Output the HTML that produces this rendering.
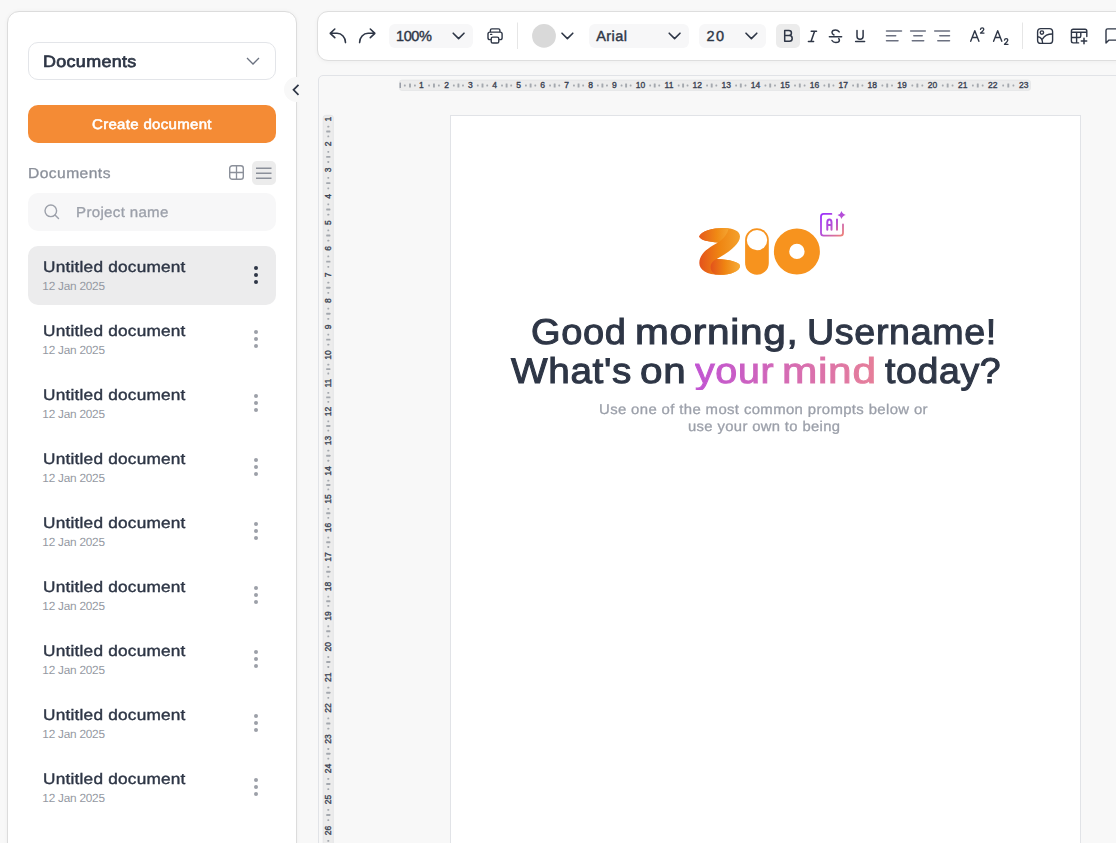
<!DOCTYPE html>
<html><head><meta charset="utf-8">
<style>
*{box-sizing:border-box;margin:0;padding:0}
html,body{width:1116px;height:843px;overflow:hidden;background:#f8f8f8;font-family:"Liberation Sans",sans-serif;color:#2e3646}
.a{position:absolute}
.t{position:absolute;white-space:nowrap;line-height:1;text-rendering:geometricPrecision}
svg{position:absolute;overflow:visible}
.ttl{font-size:15px;font-weight:bold;color:#2e3646}
.dt{font-size:11px;color:#8e939c}
.dot{position:absolute;width:4px;height:4px;border-radius:50%}
.rn{position:absolute;font-size:9px;font-weight:bold;color:#3a4252;line-height:1;white-space:nowrap}
</style></head><body>

<div class="a" style="left:7px;top:11px;width:290px;height:900px;background:#fff;border:1px solid #dcdcdc;border-radius:12px;box-shadow:0 0 4px rgba(0,0,0,0.04)"></div>
<div class="a" style="left:28px;top:42px;width:248px;height:38px;border:1px solid #e3e5e9;border-radius:10px;background:#fff"></div>
<div class="t" style="left:43.21px;top:54px;font-size:16.4px;font-weight:normal;letter-spacing:0.300px;-webkit-text-stroke:0.70px currentColor;transform:scaleX(1.0933);transform-origin:0 0;color:#2e3646">Documents</div>
<svg style="left:246px;top:57px" width="14" height="8" viewBox="0 0 14 8"><path d="M1 1 L7 7 L13 1" fill="none" stroke="#6b7280" stroke-width="1.3"/></svg>
<div class="a" style="left:28px;top:105px;width:248px;height:38px;border-radius:10px;background:#f48b35"></div>
<div class="t" style="left:91.56px;top:117px;font-size:14px;font-weight:normal;letter-spacing:0.300px;-webkit-text-stroke:0.55px currentColor;transform:scaleX(1.0710);transform-origin:0 0;color:#fff">Create document</div>
<div class="t" style="left:27.92px;top:167px;font-size:14.5px;font-weight:normal;letter-spacing:0.400px;-webkit-text-stroke:0.30px currentColor;transform:scaleX(1.0771);transform-origin:0 0;color:#8b909a">Documents</div>
<svg style="left:229px;top:165px" width="16" height="16" viewBox="0 0 16 16"><rect x="0.7" y="0.7" width="13.6" height="13.6" rx="2.6" fill="none" stroke="#8b909a" stroke-width="1.4"/><path d="M7.5 1 V14 M1 7.5 H14" stroke="#8b909a" stroke-width="1.3"/></svg>
<div class="a" style="left:252px;top:161px;width:24px;height:24px;border-radius:5px;background:#ececec"></div>
<svg style="left:256px;top:167px" width="16" height="12" viewBox="0 0 16 12"><path d="M0 1.2 H15.5 M0 6.2 H15.5 M0 11.2 H15.5" stroke="#8b909a" stroke-width="1.5"/></svg>
<div class="a" style="left:28px;top:193px;width:248px;height:38px;border-radius:10px;background:#f7f7f8"></div>
<svg style="left:44px;top:204px" width="16" height="16" viewBox="0 0 16 16"><circle cx="6.8" cy="6.8" r="5.8" fill="none" stroke="#9ca0aa" stroke-width="1.4"/><path d="M11 11 L14.5 14.5" stroke="#9ca0aa" stroke-width="1.4" stroke-linecap="round"/></svg>
<div class="t" style="left:75.95px;top:206px;font-size:14.4px;font-weight:normal;letter-spacing:0.300px;-webkit-text-stroke:0.30px currentColor;transform:scaleX(1.0491);transform-origin:0 0;color:#9ca0aa">Project name</div>
<div class="a" style="left:28px;top:246px;width:248px;height:59px;border-radius:10px;background:#ececed"></div>
<div class="t" style="left:42.97px;top:260px;font-size:15.3px;font-weight:normal;letter-spacing:0.200px;-webkit-text-stroke:0.40px currentColor;transform:scaleX(1.1257);transform-origin:0 0;color:#2e3646">Untitled document</div>
<div class="t" style="left:42.30px;top:281px;font-size:11.8px;font-weight:normal;letter-spacing:-0.230px;color:#9499a2">12 Jan 2025</div>
<div class="dot" style="left:254px;top:266px;background:#2e3646"></div>
<div class="dot" style="left:254px;top:273px;background:#2e3646"></div>
<div class="dot" style="left:254px;top:280px;background:#2e3646"></div>
<div class="t" style="left:42.97px;top:324px;font-size:15.3px;font-weight:normal;letter-spacing:0.200px;-webkit-text-stroke:0.40px currentColor;transform:scaleX(1.1257);transform-origin:0 0;color:#2e3646">Untitled document</div>
<div class="t" style="left:42.30px;top:345px;font-size:11.8px;font-weight:normal;letter-spacing:-0.230px;color:#9499a2">12 Jan 2025</div>
<div class="dot" style="left:254px;top:330px;background:#9ca0a8"></div>
<div class="dot" style="left:254px;top:337px;background:#9ca0a8"></div>
<div class="dot" style="left:254px;top:344px;background:#9ca0a8"></div>
<div class="t" style="left:42.97px;top:388px;font-size:15.3px;font-weight:normal;letter-spacing:0.200px;-webkit-text-stroke:0.40px currentColor;transform:scaleX(1.1257);transform-origin:0 0;color:#2e3646">Untitled document</div>
<div class="t" style="left:42.30px;top:409px;font-size:11.8px;font-weight:normal;letter-spacing:-0.230px;color:#9499a2">12 Jan 2025</div>
<div class="dot" style="left:254px;top:394px;background:#9ca0a8"></div>
<div class="dot" style="left:254px;top:401px;background:#9ca0a8"></div>
<div class="dot" style="left:254px;top:408px;background:#9ca0a8"></div>
<div class="t" style="left:42.97px;top:452px;font-size:15.3px;font-weight:normal;letter-spacing:0.200px;-webkit-text-stroke:0.40px currentColor;transform:scaleX(1.1257);transform-origin:0 0;color:#2e3646">Untitled document</div>
<div class="t" style="left:42.30px;top:473px;font-size:11.8px;font-weight:normal;letter-spacing:-0.230px;color:#9499a2">12 Jan 2025</div>
<div class="dot" style="left:254px;top:458px;background:#9ca0a8"></div>
<div class="dot" style="left:254px;top:465px;background:#9ca0a8"></div>
<div class="dot" style="left:254px;top:472px;background:#9ca0a8"></div>
<div class="t" style="left:42.97px;top:516px;font-size:15.3px;font-weight:normal;letter-spacing:0.200px;-webkit-text-stroke:0.40px currentColor;transform:scaleX(1.1257);transform-origin:0 0;color:#2e3646">Untitled document</div>
<div class="t" style="left:42.30px;top:537px;font-size:11.8px;font-weight:normal;letter-spacing:-0.230px;color:#9499a2">12 Jan 2025</div>
<div class="dot" style="left:254px;top:522px;background:#9ca0a8"></div>
<div class="dot" style="left:254px;top:529px;background:#9ca0a8"></div>
<div class="dot" style="left:254px;top:536px;background:#9ca0a8"></div>
<div class="t" style="left:42.97px;top:580px;font-size:15.3px;font-weight:normal;letter-spacing:0.200px;-webkit-text-stroke:0.40px currentColor;transform:scaleX(1.1257);transform-origin:0 0;color:#2e3646">Untitled document</div>
<div class="t" style="left:42.30px;top:601px;font-size:11.8px;font-weight:normal;letter-spacing:-0.230px;color:#9499a2">12 Jan 2025</div>
<div class="dot" style="left:254px;top:586px;background:#9ca0a8"></div>
<div class="dot" style="left:254px;top:593px;background:#9ca0a8"></div>
<div class="dot" style="left:254px;top:600px;background:#9ca0a8"></div>
<div class="t" style="left:42.97px;top:644px;font-size:15.3px;font-weight:normal;letter-spacing:0.200px;-webkit-text-stroke:0.40px currentColor;transform:scaleX(1.1257);transform-origin:0 0;color:#2e3646">Untitled document</div>
<div class="t" style="left:42.30px;top:665px;font-size:11.8px;font-weight:normal;letter-spacing:-0.230px;color:#9499a2">12 Jan 2025</div>
<div class="dot" style="left:254px;top:650px;background:#9ca0a8"></div>
<div class="dot" style="left:254px;top:657px;background:#9ca0a8"></div>
<div class="dot" style="left:254px;top:664px;background:#9ca0a8"></div>
<div class="t" style="left:42.97px;top:708px;font-size:15.3px;font-weight:normal;letter-spacing:0.200px;-webkit-text-stroke:0.40px currentColor;transform:scaleX(1.1257);transform-origin:0 0;color:#2e3646">Untitled document</div>
<div class="t" style="left:42.30px;top:729px;font-size:11.8px;font-weight:normal;letter-spacing:-0.230px;color:#9499a2">12 Jan 2025</div>
<div class="dot" style="left:254px;top:714px;background:#9ca0a8"></div>
<div class="dot" style="left:254px;top:721px;background:#9ca0a8"></div>
<div class="dot" style="left:254px;top:728px;background:#9ca0a8"></div>
<div class="t" style="left:42.97px;top:772px;font-size:15.3px;font-weight:normal;letter-spacing:0.200px;-webkit-text-stroke:0.40px currentColor;transform:scaleX(1.1257);transform-origin:0 0;color:#2e3646">Untitled document</div>
<div class="t" style="left:42.30px;top:793px;font-size:11.8px;font-weight:normal;letter-spacing:-0.230px;color:#9499a2">12 Jan 2025</div>
<div class="dot" style="left:254px;top:778px;background:#9ca0a8"></div>
<div class="dot" style="left:254px;top:785px;background:#9ca0a8"></div>
<div class="dot" style="left:254px;top:792px;background:#9ca0a8"></div>
<div class="a" style="left:284px;top:77px;width:25px;height:25px;border-radius:50%;background:#f8f8f8"></div>
<svg style="left:292px;top:84px" width="8" height="12" viewBox="0 0 8 12"><path d="M6.5 0.8 L1.5 5.8 L6.5 10.8" fill="none" stroke="#2e3646" stroke-width="1.7"/></svg>
<div class="a" style="left:317px;top:11px;width:900px;height:50px;background:#fff;border:1px solid #dedede;border-radius:11px;box-shadow:0 1px 4px rgba(0,0,0,0.04)"></div>
<div class="a" style="left:318px;top:75px;width:900px;height:900px;background:#f8f8f8;border:1px solid #e1e3e7;border-radius:5px"></div>
<div class="a" style="left:450px;top:115px;width:631px;height:800px;background:#fff;border:1px solid #e1e3e7"></div>
<div class="a" style="left:389px;top:24px;width:84px;height:24px;border-radius:6px;background:#f7f7f8"></div>
<div class="a" style="left:588.5px;top:24px;width:100.5px;height:24px;border-radius:6px;background:#f7f7f8"></div>
<div class="a" style="left:699px;top:24px;width:67px;height:24px;border-radius:6px;background:#f7f7f8"></div>
<svg style="left:0;top:0" width="1116" height="843" viewBox="0 0 1116 843"><path fill="none" stroke="#2e3646" stroke-width="1.6" stroke-linecap="round" stroke-linejoin="round" d="M334.8 29 L330.2 33.3 L334.8 37.6 M330.2 33.3 H337 A8.5 9.3 0 0 1 345.5 42.6"/><path fill="none" stroke="#2e3646" stroke-width="1.6" stroke-linecap="round" stroke-linejoin="round" d="M370.3 29 L374.9 33.3 L370.3 37.6 M374.9 33.3 H368.1 A8.5 9.3 0 0 0 359.6 42.6"/><path fill="none" stroke="#2e3646" stroke-width="1.4" stroke-linecap="round" stroke-linejoin="round" d="M490.4 31.5 V30.3 Q490.4 28.9 491.8 28.9 H498.5 Q499.9 28.9 499.9 30.3 V31.5"/><path fill="none" stroke="#2e3646" stroke-width="1.4" stroke-linecap="round" stroke-linejoin="round" d="M490.5 39.6 H489.9 Q488 39.6 488 37.7 V34 Q488 32.1 489.9 32.1 H500.2 Q502.1 32.1 502.1 34 V37.7 Q502.1 39.6 500.2 39.6 H499.5"/><rect fill="none" stroke="#2e3646" stroke-width="1.4" stroke-linecap="round" stroke-linejoin="round" x="491.2" y="37.1" width="7.6" height="5.9" rx="1.6"/><path d="M490.6 34.4 H491.8" stroke="#2e3646" stroke-width="1.2" stroke-linecap="round"/><path d="M517.5 22.5 V49" stroke="#e6e6e6" stroke-width="1"/><path d="M1022.5 22.5 V49" stroke="#e6e6e6" stroke-width="1"/><path fill="none" stroke="#2e3646" stroke-width="1.6" stroke-linecap="round" stroke-linejoin="round" d="M453.2 33.2 L458.59999999999997 38.6 L464.0 33.2"/><path fill="none" stroke="#2e3646" stroke-width="1.6" stroke-linecap="round" stroke-linejoin="round" d="M562 33.2 L567.4 38.6 L572.8 33.2"/><path fill="none" stroke="#2e3646" stroke-width="1.6" stroke-linecap="round" stroke-linejoin="round" d="M669.2 33.2 L674.6 38.6 L680.0 33.2"/><path fill="none" stroke="#2e3646" stroke-width="1.6" stroke-linecap="round" stroke-linejoin="round" d="M746 33.2 L751.4 38.6 L756.8 33.2"/><circle cx="544" cy="35.9" r="11.9" fill="#d9d9d9"/><rect x="776" y="24" width="24" height="24" rx="5" fill="#ececec"/><path fill="none" stroke="#2e3646" stroke-width="1.5" stroke-linecap="round" stroke-linejoin="round" d="M784.7 35.6 H788.9 A2.55 2.55 0 0 0 788.9 30.5 H784.7 V41.2 H789.4 A2.8 2.8 0 0 0 789.4 35.6"/><path fill="none" stroke="#2e3646" stroke-width="1.5" stroke-linecap="round" stroke-linejoin="round" d="M811.2 31.3 H816.5 M808.4 41.4 H813.6 M814.6 31.3 L811 41.4"/><path fill="none" stroke="#2e3646" stroke-width="1.5" stroke-linecap="round" stroke-linejoin="round" d="M839.2 31.9 C838.2 30.4 836.9 29.9 835.6 29.9 C833.5 29.9 832 31 832 32.6 C832 33.8 832.8 34.5 834 35"/><path fill="none" stroke="#2e3646" stroke-width="1.5" stroke-linecap="round" stroke-linejoin="round" d="M838.8 38.6 C839.2 39.2 839.4 39.7 839.4 40.2 C839.4 41.6 838 42.5 835.8 42.5 C834.2 42.5 832.7 41.8 832 40.5"/><path fill="none" stroke="#2e3646" stroke-width="1.5" stroke-linecap="round" stroke-linejoin="round" d="M829.4 36.8 H841.6"/><path fill="none" stroke="#2e3646" stroke-width="1.5" stroke-linecap="round" stroke-linejoin="round" d="M857 30.4 V36.2 A3.05 3.05 0 0 0 863.1 36.2 V30.4 M855.6 41.6 H864.6"/><path fill="none" stroke="#6b7080" stroke-width="1.5" stroke-linecap="round" d="M886.5 30.9 H901.5 M886.5 35.8 H895.7 M886.5 40.8 H898"/><path fill="none" stroke="#6b7080" stroke-width="1.5" stroke-linecap="round" d="M910.6 30.9 H925.3 M913.8 35.8 H922.2 M912.3 40.8 H923.7"/><path fill="none" stroke="#6b7080" stroke-width="1.5" stroke-linecap="round" d="M934.7 30.9 H949.5 M939.8 35.8 H949.5 M937.8 40.8 H949.5"/><path fill="none" stroke="#2e3646" stroke-width="1.4" stroke-linecap="round" stroke-linejoin="round" d="M970.7 41.3 L974.8 30.7 L978.9 41.3 M972.2 37.5 H977.4"/><path fill="none" stroke="#2e3646" stroke-width="1.4" stroke-linecap="round" stroke-linejoin="round" d="M993.6 41.3 L997.7 30.7 L1001.8 41.3 M995.1 37.5 H1000.3"/><path fill="none" stroke="#2e3646" stroke-width="1.3" stroke-linecap="round" stroke-linejoin="round" d="M980.5 29.4 Q980.7 27.8 982.2 27.8 Q983.8 27.8 983.8 29.3 Q983.8 30.5 980.5 33.1 H984"/><path fill="none" stroke="#2e3646" stroke-width="1.3" stroke-linecap="round" stroke-linejoin="round" d="M1004.5 40.2 Q1004.7 38.6 1006.2 38.6 Q1007.8 38.6 1007.8 40.1 Q1007.8 41.3 1004.5 44.3 H1008"/><rect fill="none" stroke="#2e3646" stroke-width="1.4" stroke-linecap="round" stroke-linejoin="round" x="1037.6" y="28.6" width="15" height="14.8" rx="3.2"/><circle fill="none" stroke="#2e3646" stroke-width="1.4" stroke-linecap="round" stroke-linejoin="round" cx="1041.9" cy="32.6" r="1.7"/><path fill="none" stroke="#2e3646" stroke-width="1.4" stroke-linecap="round" stroke-linejoin="round" d="M1037.8 36.7 C1040 37 1042.6 38.5 1042.6 43.2 M1042.6 38.8 C1044.5 35.6 1048 34 1052.4 34"/><path fill="none" stroke="#2e3646" stroke-width="1.4" stroke-linecap="round" stroke-linejoin="round" d="M1078.6 42.9 H1073.2 Q1071.4 42.9 1071.4 41.1 V31 Q1071.4 29.2 1073.2 29.2 H1085 Q1086.8 29.2 1086.8 31 V36.5 M1071.4 32.3 H1086.8 M1076.6 32.3 V42.9 M1071.4 37.5 H1079.3 Q1080.8 37.5 1080.8 36 V32.3"/><path d="M1084 38.3 V43.7 M1081.3 41 H1086.7" stroke="#2e3646" stroke-width="1.5" stroke-linecap="round"/><path fill="none" stroke="#2e3646" stroke-width="1.4" stroke-linecap="round" stroke-linejoin="round" d="M1116 28.9 H1107.7 Q1106 28.9 1106 30.6 V43 L1109 40.1 H1116"/></svg>
<div class="t" style="left:396.00px;top:30px;font-size:14.5px;font-weight:normal;letter-spacing:-0.383px;-webkit-text-stroke:0.40px currentColor;color:#2e3646">100%</div>
<div class="t" style="left:596.25px;top:30px;font-size:14.5px;font-weight:normal;letter-spacing:0.425px;-webkit-text-stroke:0.40px currentColor;color:#2e3646">Arial</div>
<div class="t" style="left:706.60px;top:30px;font-size:14.5px;font-weight:normal;letter-spacing:1.350px;-webkit-text-stroke:0.40px currentColor;color:#2e3646">20</div>
<svg style="left:0;top:0" width="1116" height="843" viewBox="0 0 1116 843"><rect x="399.5" y="80" width="631" height="10.5" rx="2.5" fill="#ececec" stroke="#e3e4e6" stroke-width="0.8"/><rect x="399.5" y="82.6" width="1.5" height="5.5" rx="0.5" fill="#9a9ea8"/><rect x="403.90" y="84.6" width="1.8" height="1.8" rx="0.4" fill="#a4a8ae"/><rect x="409.05" y="83.4" width="1.9" height="4.2" rx="0.4" fill="#a4a8ae"/><rect x="414.00" y="84.6" width="1.8" height="1.8" rx="0.4" fill="#a4a8ae"/><rect x="428.15" y="84.6" width="1.8" height="1.8" rx="0.4" fill="#a4a8ae"/><rect x="433.00" y="83.4" width="1.9" height="4.2" rx="0.4" fill="#a4a8ae"/><rect x="437.95" y="84.6" width="1.8" height="1.8" rx="0.4" fill="#a4a8ae"/><rect x="452.93" y="84.6" width="1.8" height="1.8" rx="0.4" fill="#a4a8ae"/><rect x="457.45" y="83.4" width="1.9" height="4.2" rx="0.4" fill="#a4a8ae"/><rect x="462.08" y="84.6" width="1.8" height="1.8" rx="0.4" fill="#a4a8ae"/><rect x="476.88" y="84.6" width="1.8" height="1.8" rx="0.4" fill="#a4a8ae"/><rect x="481.55" y="83.4" width="1.9" height="4.2" rx="0.4" fill="#a4a8ae"/><rect x="486.33" y="84.6" width="1.8" height="1.8" rx="0.4" fill="#a4a8ae"/><rect x="501.12" y="84.6" width="1.8" height="1.8" rx="0.4" fill="#a4a8ae"/><rect x="505.65" y="83.4" width="1.9" height="4.2" rx="0.4" fill="#a4a8ae"/><rect x="510.28" y="84.6" width="1.8" height="1.8" rx="0.4" fill="#a4a8ae"/><rect x="525.02" y="84.6" width="1.8" height="1.8" rx="0.4" fill="#a4a8ae"/><rect x="529.65" y="83.4" width="1.9" height="4.2" rx="0.4" fill="#a4a8ae"/><rect x="534.38" y="84.6" width="1.8" height="1.8" rx="0.4" fill="#a4a8ae"/><rect x="549.15" y="84.6" width="1.8" height="1.8" rx="0.4" fill="#a4a8ae"/><rect x="553.70" y="83.4" width="1.9" height="4.2" rx="0.4" fill="#a4a8ae"/><rect x="558.35" y="84.6" width="1.8" height="1.8" rx="0.4" fill="#a4a8ae"/><rect x="573.05" y="84.6" width="1.8" height="1.8" rx="0.4" fill="#a4a8ae"/><rect x="577.60" y="83.4" width="1.9" height="4.2" rx="0.4" fill="#a4a8ae"/><rect x="582.25" y="84.6" width="1.8" height="1.8" rx="0.4" fill="#a4a8ae"/><rect x="596.93" y="84.6" width="1.8" height="1.8" rx="0.4" fill="#a4a8ae"/><rect x="601.45" y="83.4" width="1.9" height="4.2" rx="0.4" fill="#a4a8ae"/><rect x="606.07" y="84.6" width="1.8" height="1.8" rx="0.4" fill="#a4a8ae"/><rect x="620.67" y="84.6" width="1.8" height="1.8" rx="0.4" fill="#a4a8ae"/><rect x="625.15" y="83.4" width="1.9" height="4.2" rx="0.4" fill="#a4a8ae"/><rect x="629.73" y="84.6" width="1.8" height="1.8" rx="0.4" fill="#a4a8ae"/><rect x="649.27" y="84.6" width="1.8" height="1.8" rx="0.4" fill="#a4a8ae"/><rect x="653.75" y="83.4" width="1.9" height="4.2" rx="0.4" fill="#a4a8ae"/><rect x="658.33" y="84.6" width="1.8" height="1.8" rx="0.4" fill="#a4a8ae"/><rect x="677.77" y="84.6" width="1.8" height="1.8" rx="0.4" fill="#a4a8ae"/><rect x="682.15" y="83.4" width="1.9" height="4.2" rx="0.4" fill="#a4a8ae"/><rect x="686.63" y="84.6" width="1.8" height="1.8" rx="0.4" fill="#a4a8ae"/><rect x="706.18" y="84.6" width="1.8" height="1.8" rx="0.4" fill="#a4a8ae"/><rect x="710.75" y="83.4" width="1.9" height="4.2" rx="0.4" fill="#a4a8ae"/><rect x="715.43" y="84.6" width="1.8" height="1.8" rx="0.4" fill="#a4a8ae"/><rect x="735.23" y="84.6" width="1.8" height="1.8" rx="0.4" fill="#a4a8ae"/><rect x="739.85" y="83.4" width="1.9" height="4.2" rx="0.4" fill="#a4a8ae"/><rect x="744.58" y="84.6" width="1.8" height="1.8" rx="0.4" fill="#a4a8ae"/><rect x="764.52" y="84.6" width="1.8" height="1.8" rx="0.4" fill="#a4a8ae"/><rect x="769.25" y="83.4" width="1.9" height="4.2" rx="0.4" fill="#a4a8ae"/><rect x="774.08" y="84.6" width="1.8" height="1.8" rx="0.4" fill="#a4a8ae"/><rect x="794.12" y="84.6" width="1.8" height="1.8" rx="0.4" fill="#a4a8ae"/><rect x="798.85" y="83.4" width="1.9" height="4.2" rx="0.4" fill="#a4a8ae"/><rect x="803.68" y="84.6" width="1.8" height="1.8" rx="0.4" fill="#a4a8ae"/><rect x="823.48" y="84.6" width="1.8" height="1.8" rx="0.4" fill="#a4a8ae"/><rect x="827.95" y="83.4" width="1.9" height="4.2" rx="0.4" fill="#a4a8ae"/><rect x="832.53" y="84.6" width="1.8" height="1.8" rx="0.4" fill="#a4a8ae"/><rect x="852.20" y="84.6" width="1.8" height="1.8" rx="0.4" fill="#a4a8ae"/><rect x="856.80" y="83.4" width="1.9" height="4.2" rx="0.4" fill="#a4a8ae"/><rect x="861.50" y="84.6" width="1.8" height="1.8" rx="0.4" fill="#a4a8ae"/><rect x="881.48" y="84.6" width="1.8" height="1.8" rx="0.4" fill="#a4a8ae"/><rect x="886.25" y="83.4" width="1.9" height="4.2" rx="0.4" fill="#a4a8ae"/><rect x="891.12" y="84.6" width="1.8" height="1.8" rx="0.4" fill="#a4a8ae"/><rect x="911.45" y="84.6" width="1.8" height="1.8" rx="0.4" fill="#a4a8ae"/><rect x="916.40" y="83.4" width="1.9" height="4.2" rx="0.4" fill="#a4a8ae"/><rect x="921.45" y="84.6" width="1.8" height="1.8" rx="0.4" fill="#a4a8ae"/><rect x="941.85" y="84.6" width="1.8" height="1.8" rx="0.4" fill="#a4a8ae"/><rect x="946.70" y="83.4" width="1.9" height="4.2" rx="0.4" fill="#a4a8ae"/><rect x="951.65" y="84.6" width="1.8" height="1.8" rx="0.4" fill="#a4a8ae"/><rect x="971.95" y="84.6" width="1.8" height="1.8" rx="0.4" fill="#a4a8ae"/><rect x="976.80" y="83.4" width="1.9" height="4.2" rx="0.4" fill="#a4a8ae"/><rect x="981.75" y="84.6" width="1.8" height="1.8" rx="0.4" fill="#a4a8ae"/><rect x="1002.27" y="84.6" width="1.8" height="1.8" rx="0.4" fill="#a4a8ae"/><rect x="1007.35" y="83.4" width="1.9" height="4.2" rx="0.4" fill="#a4a8ae"/><rect x="1012.52" y="84.6" width="1.8" height="1.8" rx="0.4" fill="#a4a8ae"/><text x="421.40" y="87.9" text-anchor="middle" font-family="Liberation Sans" font-weight="normal" font-size="8.5" fill="#3a4252" stroke="#3a4252" stroke-width="0.35">1</text><text x="446.50" y="87.9" text-anchor="middle" font-family="Liberation Sans" font-weight="normal" font-size="8.5" fill="#3a4252" stroke="#3a4252" stroke-width="0.35">2</text><text x="470.30" y="87.9" text-anchor="middle" font-family="Liberation Sans" font-weight="normal" font-size="8.5" fill="#3a4252" stroke="#3a4252" stroke-width="0.35">3</text><text x="494.70" y="87.9" text-anchor="middle" font-family="Liberation Sans" font-weight="normal" font-size="8.5" fill="#3a4252" stroke="#3a4252" stroke-width="0.35">4</text><text x="518.50" y="87.9" text-anchor="middle" font-family="Liberation Sans" font-weight="normal" font-size="8.5" fill="#3a4252" stroke="#3a4252" stroke-width="0.35">5</text><text x="542.70" y="87.9" text-anchor="middle" font-family="Liberation Sans" font-weight="normal" font-size="8.5" fill="#3a4252" stroke="#3a4252" stroke-width="0.35">6</text><text x="566.60" y="87.9" text-anchor="middle" font-family="Liberation Sans" font-weight="normal" font-size="8.5" fill="#3a4252" stroke="#3a4252" stroke-width="0.35">7</text><text x="590.50" y="87.9" text-anchor="middle" font-family="Liberation Sans" font-weight="normal" font-size="8.5" fill="#3a4252" stroke="#3a4252" stroke-width="0.35">8</text><text x="614.30" y="87.9" text-anchor="middle" font-family="Liberation Sans" font-weight="normal" font-size="8.5" fill="#3a4252" stroke="#3a4252" stroke-width="0.35">9</text><text x="640.40" y="87.9" text-anchor="middle" font-family="Liberation Sans" font-weight="normal" font-size="8.5" fill="#3a4252" stroke="#3a4252" stroke-width="0.35">10</text><text x="669.00" y="87.9" text-anchor="middle" font-family="Liberation Sans" font-weight="normal" font-size="8.5" fill="#3a4252" stroke="#3a4252" stroke-width="0.35">11</text><text x="697.20" y="87.9" text-anchor="middle" font-family="Liberation Sans" font-weight="normal" font-size="8.5" fill="#3a4252" stroke="#3a4252" stroke-width="0.35">12</text><text x="726.20" y="87.9" text-anchor="middle" font-family="Liberation Sans" font-weight="normal" font-size="8.5" fill="#3a4252" stroke="#3a4252" stroke-width="0.35">13</text><text x="755.40" y="87.9" text-anchor="middle" font-family="Liberation Sans" font-weight="normal" font-size="8.5" fill="#3a4252" stroke="#3a4252" stroke-width="0.35">14</text><text x="785.00" y="87.9" text-anchor="middle" font-family="Liberation Sans" font-weight="normal" font-size="8.5" fill="#3a4252" stroke="#3a4252" stroke-width="0.35">15</text><text x="814.60" y="87.9" text-anchor="middle" font-family="Liberation Sans" font-weight="normal" font-size="8.5" fill="#3a4252" stroke="#3a4252" stroke-width="0.35">16</text><text x="843.20" y="87.9" text-anchor="middle" font-family="Liberation Sans" font-weight="normal" font-size="8.5" fill="#3a4252" stroke="#3a4252" stroke-width="0.35">17</text><text x="872.30" y="87.9" text-anchor="middle" font-family="Liberation Sans" font-weight="normal" font-size="8.5" fill="#3a4252" stroke="#3a4252" stroke-width="0.35">18</text><text x="902.10" y="87.9" text-anchor="middle" font-family="Liberation Sans" font-weight="normal" font-size="8.5" fill="#3a4252" stroke="#3a4252" stroke-width="0.35">19</text><text x="932.60" y="87.9" text-anchor="middle" font-family="Liberation Sans" font-weight="normal" font-size="8.5" fill="#3a4252" stroke="#3a4252" stroke-width="0.35">20</text><text x="962.70" y="87.9" text-anchor="middle" font-family="Liberation Sans" font-weight="normal" font-size="8.5" fill="#3a4252" stroke="#3a4252" stroke-width="0.35">21</text><text x="992.80" y="87.9" text-anchor="middle" font-family="Liberation Sans" font-weight="normal" font-size="8.5" fill="#3a4252" stroke="#3a4252" stroke-width="0.35">22</text><text x="1023.80" y="87.9" text-anchor="middle" font-family="Liberation Sans" font-weight="normal" font-size="8.5" fill="#3a4252" stroke="#3a4252" stroke-width="0.35">23</text><rect x="323.2" y="115.3" width="10.2" height="740" rx="2.5" fill="#ececec" stroke="#e3e4e6" stroke-width="0.8"/><rect x="327.4" y="125.80" width="1.8" height="1.8" rx="0.4" fill="#a4a8ae"/><rect x="326.2" y="130.60" width="4.2" height="1.9" rx="0.4" fill="#a4a8ae"/><rect x="327.4" y="135.50" width="1.8" height="1.8" rx="0.4" fill="#a4a8ae"/><rect x="327.4" y="150.92" width="1.8" height="1.8" rx="0.4" fill="#a4a8ae"/><rect x="326.2" y="155.95" width="4.2" height="1.9" rx="0.4" fill="#a4a8ae"/><rect x="327.4" y="161.08" width="1.8" height="1.8" rx="0.4" fill="#a4a8ae"/><rect x="327.4" y="176.93" width="1.8" height="1.8" rx="0.4" fill="#a4a8ae"/><rect x="326.2" y="182.15" width="4.2" height="1.9" rx="0.4" fill="#a4a8ae"/><rect x="327.4" y="187.47" width="1.8" height="1.8" rx="0.4" fill="#a4a8ae"/><rect x="327.4" y="203.42" width="1.8" height="1.8" rx="0.4" fill="#a4a8ae"/><rect x="326.2" y="208.55" width="4.2" height="1.9" rx="0.4" fill="#a4a8ae"/><rect x="327.4" y="213.78" width="1.8" height="1.8" rx="0.4" fill="#a4a8ae"/><rect x="327.4" y="229.55" width="1.8" height="1.8" rx="0.4" fill="#a4a8ae"/><rect x="326.2" y="234.60" width="4.2" height="1.9" rx="0.4" fill="#a4a8ae"/><rect x="327.4" y="239.75" width="1.8" height="1.8" rx="0.4" fill="#a4a8ae"/><rect x="327.4" y="255.55" width="1.8" height="1.8" rx="0.4" fill="#a4a8ae"/><rect x="326.2" y="260.70" width="4.2" height="1.9" rx="0.4" fill="#a4a8ae"/><rect x="327.4" y="265.95" width="1.8" height="1.8" rx="0.4" fill="#a4a8ae"/><rect x="327.4" y="281.73" width="1.8" height="1.8" rx="0.4" fill="#a4a8ae"/><rect x="326.2" y="286.75" width="4.2" height="1.9" rx="0.4" fill="#a4a8ae"/><rect x="327.4" y="291.88" width="1.8" height="1.8" rx="0.4" fill="#a4a8ae"/><rect x="327.4" y="307.63" width="1.8" height="1.8" rx="0.4" fill="#a4a8ae"/><rect x="326.2" y="312.75" width="4.2" height="1.9" rx="0.4" fill="#a4a8ae"/><rect x="327.4" y="317.98" width="1.8" height="1.8" rx="0.4" fill="#a4a8ae"/><rect x="327.4" y="333.70" width="1.8" height="1.8" rx="0.4" fill="#a4a8ae"/><rect x="326.2" y="338.70" width="4.2" height="1.9" rx="0.4" fill="#a4a8ae"/><rect x="327.4" y="343.80" width="1.8" height="1.8" rx="0.4" fill="#a4a8ae"/><rect x="327.4" y="363.78" width="1.8" height="1.8" rx="0.4" fill="#a4a8ae"/><rect x="326.2" y="368.15" width="4.2" height="1.9" rx="0.4" fill="#a4a8ae"/><rect x="327.4" y="372.62" width="1.8" height="1.8" rx="0.4" fill="#a4a8ae"/><rect x="327.4" y="392.00" width="1.8" height="1.8" rx="0.4" fill="#a4a8ae"/><rect x="326.2" y="396.40" width="4.2" height="1.9" rx="0.4" fill="#a4a8ae"/><rect x="327.4" y="400.90" width="1.8" height="1.8" rx="0.4" fill="#a4a8ae"/><rect x="327.4" y="420.45" width="1.8" height="1.8" rx="0.4" fill="#a4a8ae"/><rect x="326.2" y="425.00" width="4.2" height="1.9" rx="0.4" fill="#a4a8ae"/><rect x="327.4" y="429.65" width="1.8" height="1.8" rx="0.4" fill="#a4a8ae"/><rect x="327.4" y="449.77" width="1.8" height="1.8" rx="0.4" fill="#a4a8ae"/><rect x="326.2" y="454.75" width="4.2" height="1.9" rx="0.4" fill="#a4a8ae"/><rect x="327.4" y="459.83" width="1.8" height="1.8" rx="0.4" fill="#a4a8ae"/><rect x="327.4" y="479.73" width="1.8" height="1.8" rx="0.4" fill="#a4a8ae"/><rect x="326.2" y="484.05" width="4.2" height="1.9" rx="0.4" fill="#a4a8ae"/><rect x="327.4" y="488.48" width="1.8" height="1.8" rx="0.4" fill="#a4a8ae"/><rect x="327.4" y="507.88" width="1.8" height="1.8" rx="0.4" fill="#a4a8ae"/><rect x="326.2" y="512.35" width="4.2" height="1.9" rx="0.4" fill="#a4a8ae"/><rect x="327.4" y="516.93" width="1.8" height="1.8" rx="0.4" fill="#a4a8ae"/><rect x="327.4" y="536.68" width="1.8" height="1.8" rx="0.4" fill="#a4a8ae"/><rect x="326.2" y="541.35" width="4.2" height="1.9" rx="0.4" fill="#a4a8ae"/><rect x="327.4" y="546.12" width="1.8" height="1.8" rx="0.4" fill="#a4a8ae"/><rect x="327.4" y="566.12" width="1.8" height="1.8" rx="0.4" fill="#a4a8ae"/><rect x="326.2" y="570.85" width="4.2" height="1.9" rx="0.4" fill="#a4a8ae"/><rect x="327.4" y="575.68" width="1.8" height="1.8" rx="0.4" fill="#a4a8ae"/><rect x="327.4" y="595.65" width="1.8" height="1.8" rx="0.4" fill="#a4a8ae"/><rect x="326.2" y="600.30" width="4.2" height="1.9" rx="0.4" fill="#a4a8ae"/><rect x="327.4" y="605.05" width="1.8" height="1.8" rx="0.4" fill="#a4a8ae"/><rect x="327.4" y="625.33" width="1.8" height="1.8" rx="0.4" fill="#a4a8ae"/><rect x="326.2" y="630.35" width="4.2" height="1.9" rx="0.4" fill="#a4a8ae"/><rect x="327.4" y="635.48" width="1.8" height="1.8" rx="0.4" fill="#a4a8ae"/><rect x="327.4" y="656.08" width="1.8" height="1.8" rx="0.4" fill="#a4a8ae"/><rect x="326.2" y="661.05" width="4.2" height="1.9" rx="0.4" fill="#a4a8ae"/><rect x="327.4" y="666.12" width="1.8" height="1.8" rx="0.4" fill="#a4a8ae"/><rect x="327.4" y="686.73" width="1.8" height="1.8" rx="0.4" fill="#a4a8ae"/><rect x="326.2" y="691.75" width="4.2" height="1.9" rx="0.4" fill="#a4a8ae"/><rect x="327.4" y="696.88" width="1.8" height="1.8" rx="0.4" fill="#a4a8ae"/><rect x="327.4" y="717.55" width="1.8" height="1.8" rx="0.4" fill="#a4a8ae"/><rect x="326.2" y="722.60" width="4.2" height="1.9" rx="0.4" fill="#a4a8ae"/><rect x="327.4" y="727.75" width="1.8" height="1.8" rx="0.4" fill="#a4a8ae"/><rect x="327.4" y="748.12" width="1.8" height="1.8" rx="0.4" fill="#a4a8ae"/><rect x="326.2" y="752.85" width="4.2" height="1.9" rx="0.4" fill="#a4a8ae"/><rect x="327.4" y="757.68" width="1.8" height="1.8" rx="0.4" fill="#a4a8ae"/><rect x="327.4" y="778.05" width="1.8" height="1.8" rx="0.4" fill="#a4a8ae"/><rect x="326.2" y="783.10" width="4.2" height="1.9" rx="0.4" fill="#a4a8ae"/><rect x="327.4" y="788.25" width="1.8" height="1.8" rx="0.4" fill="#a4a8ae"/><rect x="327.4" y="809.00" width="1.8" height="1.8" rx="0.4" fill="#a4a8ae"/><rect x="326.2" y="814.10" width="4.2" height="1.9" rx="0.4" fill="#a4a8ae"/><rect x="327.4" y="819.30" width="1.8" height="1.8" rx="0.4" fill="#a4a8ae"/><rect x="327.4" y="840.05" width="1.8" height="1.8" rx="0.4" fill="#a4a8ae"/><rect x="326.2" y="845.10" width="4.2" height="1.9" rx="0.4" fill="#a4a8ae"/><rect x="327.4" y="850.25" width="1.8" height="1.8" rx="0.4" fill="#a4a8ae"/><text transform="translate(331.3 119.10) rotate(-90)" x="0" y="0" text-anchor="middle" font-family="Liberation Sans" font-weight="normal" font-size="8.5" fill="#3a4252" stroke="#3a4252" stroke-width="0.35">1</text><text transform="translate(331.3 144.00) rotate(-90)" x="0" y="0" text-anchor="middle" font-family="Liberation Sans" font-weight="normal" font-size="8.5" fill="#3a4252" stroke="#3a4252" stroke-width="0.35">2</text><text transform="translate(331.3 169.80) rotate(-90)" x="0" y="0" text-anchor="middle" font-family="Liberation Sans" font-weight="normal" font-size="8.5" fill="#3a4252" stroke="#3a4252" stroke-width="0.35">3</text><text transform="translate(331.3 196.40) rotate(-90)" x="0" y="0" text-anchor="middle" font-family="Liberation Sans" font-weight="normal" font-size="8.5" fill="#3a4252" stroke="#3a4252" stroke-width="0.35">4</text><text transform="translate(331.3 222.60) rotate(-90)" x="0" y="0" text-anchor="middle" font-family="Liberation Sans" font-weight="normal" font-size="8.5" fill="#3a4252" stroke="#3a4252" stroke-width="0.35">5</text><text transform="translate(331.3 248.50) rotate(-90)" x="0" y="0" text-anchor="middle" font-family="Liberation Sans" font-weight="normal" font-size="8.5" fill="#3a4252" stroke="#3a4252" stroke-width="0.35">6</text><text transform="translate(331.3 274.80) rotate(-90)" x="0" y="0" text-anchor="middle" font-family="Liberation Sans" font-weight="normal" font-size="8.5" fill="#3a4252" stroke="#3a4252" stroke-width="0.35">7</text><text transform="translate(331.3 300.60) rotate(-90)" x="0" y="0" text-anchor="middle" font-family="Liberation Sans" font-weight="normal" font-size="8.5" fill="#3a4252" stroke="#3a4252" stroke-width="0.35">8</text><text transform="translate(331.3 326.80) rotate(-90)" x="0" y="0" text-anchor="middle" font-family="Liberation Sans" font-weight="normal" font-size="8.5" fill="#3a4252" stroke="#3a4252" stroke-width="0.35">9</text><text transform="translate(331.3 355.00) rotate(-90)" x="0" y="0" text-anchor="middle" font-family="Liberation Sans" font-weight="normal" font-size="8.5" fill="#3a4252" stroke="#3a4252" stroke-width="0.35">10</text><text transform="translate(331.3 383.20) rotate(-90)" x="0" y="0" text-anchor="middle" font-family="Liberation Sans" font-weight="normal" font-size="8.5" fill="#3a4252" stroke="#3a4252" stroke-width="0.35">11</text><text transform="translate(331.3 411.50) rotate(-90)" x="0" y="0" text-anchor="middle" font-family="Liberation Sans" font-weight="normal" font-size="8.5" fill="#3a4252" stroke="#3a4252" stroke-width="0.35">12</text><text transform="translate(331.3 440.40) rotate(-90)" x="0" y="0" text-anchor="middle" font-family="Liberation Sans" font-weight="normal" font-size="8.5" fill="#3a4252" stroke="#3a4252" stroke-width="0.35">13</text><text transform="translate(331.3 471.00) rotate(-90)" x="0" y="0" text-anchor="middle" font-family="Liberation Sans" font-weight="normal" font-size="8.5" fill="#3a4252" stroke="#3a4252" stroke-width="0.35">14</text><text transform="translate(331.3 499.00) rotate(-90)" x="0" y="0" text-anchor="middle" font-family="Liberation Sans" font-weight="normal" font-size="8.5" fill="#3a4252" stroke="#3a4252" stroke-width="0.35">15</text><text transform="translate(331.3 527.60) rotate(-90)" x="0" y="0" text-anchor="middle" font-family="Liberation Sans" font-weight="normal" font-size="8.5" fill="#3a4252" stroke="#3a4252" stroke-width="0.35">16</text><text transform="translate(331.3 557.00) rotate(-90)" x="0" y="0" text-anchor="middle" font-family="Liberation Sans" font-weight="normal" font-size="8.5" fill="#3a4252" stroke="#3a4252" stroke-width="0.35">17</text><text transform="translate(331.3 586.60) rotate(-90)" x="0" y="0" text-anchor="middle" font-family="Liberation Sans" font-weight="normal" font-size="8.5" fill="#3a4252" stroke="#3a4252" stroke-width="0.35">18</text><text transform="translate(331.3 615.90) rotate(-90)" x="0" y="0" text-anchor="middle" font-family="Liberation Sans" font-weight="normal" font-size="8.5" fill="#3a4252" stroke="#3a4252" stroke-width="0.35">19</text><text transform="translate(331.3 646.70) rotate(-90)" x="0" y="0" text-anchor="middle" font-family="Liberation Sans" font-weight="normal" font-size="8.5" fill="#3a4252" stroke="#3a4252" stroke-width="0.35">20</text><text transform="translate(331.3 677.30) rotate(-90)" x="0" y="0" text-anchor="middle" font-family="Liberation Sans" font-weight="normal" font-size="8.5" fill="#3a4252" stroke="#3a4252" stroke-width="0.35">21</text><text transform="translate(331.3 708.10) rotate(-90)" x="0" y="0" text-anchor="middle" font-family="Liberation Sans" font-weight="normal" font-size="8.5" fill="#3a4252" stroke="#3a4252" stroke-width="0.35">22</text><text transform="translate(331.3 739.00) rotate(-90)" x="0" y="0" text-anchor="middle" font-family="Liberation Sans" font-weight="normal" font-size="8.5" fill="#3a4252" stroke="#3a4252" stroke-width="0.35">23</text><text transform="translate(331.3 768.60) rotate(-90)" x="0" y="0" text-anchor="middle" font-family="Liberation Sans" font-weight="normal" font-size="8.5" fill="#3a4252" stroke="#3a4252" stroke-width="0.35">24</text><text transform="translate(331.3 799.50) rotate(-90)" x="0" y="0" text-anchor="middle" font-family="Liberation Sans" font-weight="normal" font-size="8.5" fill="#3a4252" stroke="#3a4252" stroke-width="0.35">25</text><text transform="translate(331.3 830.60) rotate(-90)" x="0" y="0" text-anchor="middle" font-family="Liberation Sans" font-weight="normal" font-size="8.5" fill="#3a4252" stroke="#3a4252" stroke-width="0.35">26</text><text transform="translate(331.3 861.50) rotate(-90)" x="0" y="0" text-anchor="middle" font-family="Liberation Sans" font-weight="normal" font-size="8.5" fill="#3a4252" stroke="#3a4252" stroke-width="0.35">27</text></svg>
<svg style="left:0;top:0" width="1116" height="843" viewBox="0 0 1116 843"><defs><linearGradient id="zg" x1="699" y1="0" x2="729" y2="0" gradientUnits="userSpaceOnUse"><stop offset="0" stop-color="#e65a1c"/><stop offset="0.6" stop-color="#f08a14"/><stop offset="1" stop-color="#f5a532"/></linearGradient><linearGradient id="zg2" x1="699" y1="0" x2="740" y2="0" gradientUnits="userSpaceOnUse"><stop offset="0" stop-color="#e4521c"/><stop offset="0.5" stop-color="#ef8512"/><stop offset="1" stop-color="#f4a12c"/></linearGradient><linearGradient id="zg3" x1="710" y1="0" x2="740" y2="0" gradientUnits="userSpaceOnUse"><stop offset="0" stop-color="#e2501c"/><stop offset="0.5" stop-color="#ef8512"/><stop offset="1" stop-color="#f7ad38"/></linearGradient><linearGradient id="aig" x1="821" y1="212" x2="844" y2="237" gradientUnits="userSpaceOnUse"><stop offset="0" stop-color="#9a2cff"/><stop offset="0.5" stop-color="#b54fd8"/><stop offset="1" stop-color="#f5896a"/></linearGradient></defs><path fill="url(#zg2)" d="M699.1 236.6 C701 231.5 712 228.1 724 228.1 C733 228.1 740 231 740 236.5 C740 244 728 253 716.8 259 C729 259.5 740 262 740 265.9 C740 271 731 274.8 719.5 274.8 C707 274.8 699.3 270 699.3 263 C699.3 254 708 248 718 242.6 C709 242 700.5 240.5 699.1 236.6 Z"/><path fill="url(#zg)" d="M699.1 236.6 C701 231.5 712 228.1 724 228.1 L728.7 228.3 C727.5 234 723.5 239 718 242.6 C709 242 700.5 240.5 699.1 236.6 Z"/><path fill="url(#zg3)" d="M716.8 259 C729 259.5 740 262 740 265.9 C740 271 731 274.8 719.5 274.8 L715 274.4 C711.5 272.5 709.8 268.5 711 264.5 C712.3 261.8 714.3 259.8 716.8 259 Z"/><rect x="745.1" y="228.2" width="23.7" height="46.6" rx="11.85" fill="#f7931e"/><circle cx="757" cy="240.1" r="10.2" fill="#fff"/><circle cx="796.9" cy="251.4" r="15.35" fill="none" stroke="#f7931e" stroke-width="15.3"/><path fill="none" stroke="url(#aig)" stroke-width="1.8" stroke-linecap="round" stroke-linejoin="round" d="M831.4 213.9 H823.6 Q821 213.9 821 216.5 V233 Q821 235.6 823.6 235.6 H840.4 Q843 235.6 843 233 V224.4"/><path fill="none" stroke="url(#aig)" stroke-width="2" stroke-linecap="round" stroke-linejoin="round" d="M827.3 229.8 V222.4 Q827.3 219.6 829.4 219.6 Q831.5 219.6 831.5 222.4 V229.8 M827.3 225 H831.5 M837 219.6 V229.8"/><path fill="url(#aig)" d="M841.6 211 Q842.4 214.1 845.8 214.9 Q842.4 215.7 841.6 218.9 Q840.8 215.7 837.5 214.9 Q840.8 214.1 841.6 211 Z"/></svg>
<div class="t" style="left:530.87px;top:315px;font-size:35.8px;font-weight:normal;letter-spacing:0.600px;-webkit-text-stroke:1.00px currentColor;transform:scaleX(1.0603);transform-origin:0 0;color:#2e3646">Good</div>
<div class="t" style="left:634.51px;top:315px;font-size:35.8px;font-weight:normal;letter-spacing:0.600px;-webkit-text-stroke:1.00px currentColor;transform:scaleX(1.1349);transform-origin:0 0;color:#2e3646">morning,</div>
<div class="t" style="left:806.63px;top:315px;font-size:35.8px;font-weight:normal;letter-spacing:0.600px;-webkit-text-stroke:1.00px currentColor;transform:scaleX(1.0526);transform-origin:0 0;color:#2e3646">Username!</div>
<div class="t" style="left:511.04px;top:354px;font-size:35.8px;font-weight:normal;letter-spacing:0.600px;-webkit-text-stroke:1.00px currentColor;transform:scaleX(1.0820);transform-origin:0 0;color:#2e3646">What&#39;s</div>
<div class="t" style="left:640.27px;top:354px;font-size:35.8px;font-weight:normal;letter-spacing:0.600px;-webkit-text-stroke:1.00px currentColor;transform:scaleX(1.1277);transform-origin:0 0;color:#2e3646">on</div>
<div class="t" style="left:884.60px;top:354px;font-size:35.8px;font-weight:normal;letter-spacing:0.600px;-webkit-text-stroke:1.00px currentColor;transform:scaleX(1.0469);transform-origin:0 0;color:#2e3646">today?</div>
<div class="t" style="left:694.75px;top:354px;font-size:35.8px;font-weight:normal;letter-spacing:0.600px;-webkit-text-stroke:1.00px currentColor;transform:scaleX(1.1003);transform-origin:0 0;color:#c154d2;background:linear-gradient(90deg,#c154d2,#d167b9);-webkit-background-clip:text;background-clip:text;-webkit-text-fill-color:transparent;-webkit-text-stroke-color:transparent">your</div>
<div class="t" style="left:782.43px;top:354px;font-size:35.8px;font-weight:normal;letter-spacing:0.600px;-webkit-text-stroke:1.00px currentColor;transform:scaleX(1.1834);transform-origin:0 0;color:#d46ab5;background:linear-gradient(90deg,#d46ab5,#e67f99);-webkit-background-clip:text;background-clip:text;-webkit-text-fill-color:transparent;-webkit-text-stroke-color:transparent">mind</div>
<div class="t" style="left:599.24px;top:402px;font-size:14.1px;font-weight:normal;letter-spacing:0.350px;-webkit-text-stroke:0.30px currentColor;transform:scaleX(1.0572);transform-origin:0 0;color:#9ca0aa">Use one of the most common prompts below or</div>
<div class="t" style="left:687.61px;top:419px;font-size:14.1px;font-weight:normal;letter-spacing:0.350px;-webkit-text-stroke:0.30px currentColor;transform:scaleX(1.0495);transform-origin:0 0;color:#9ca0aa">use your own to being</div>
</body></html>
